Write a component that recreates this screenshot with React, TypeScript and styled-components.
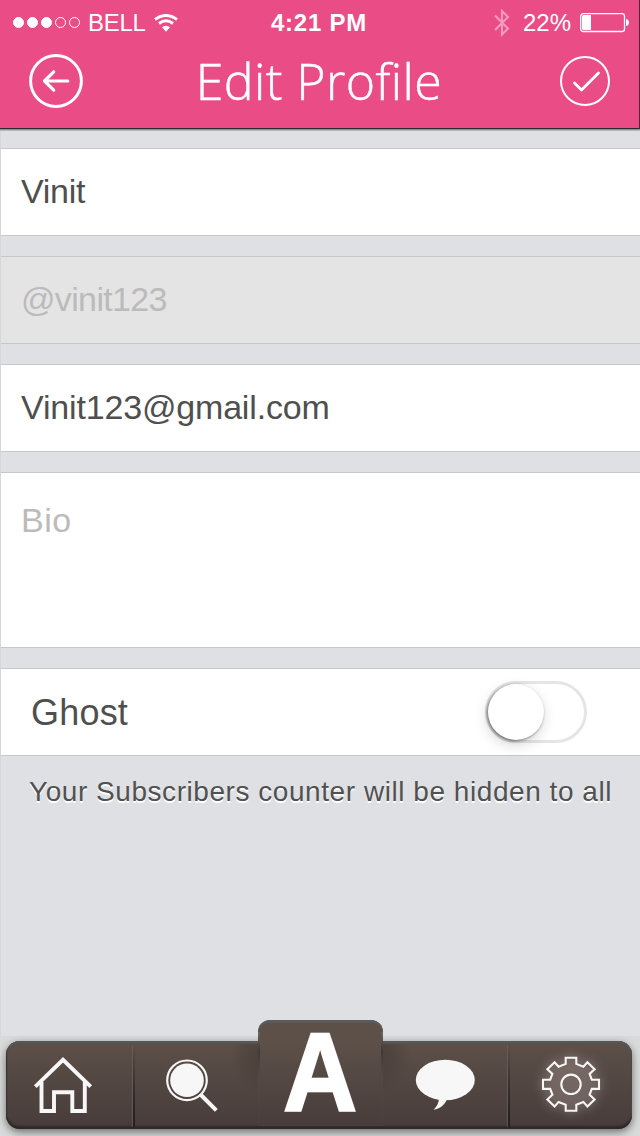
import React from "react";
import styled, { createGlobalStyle } from "styled-components";

const GlobalStyle = createGlobalStyle`
  * { box-sizing: border-box; }
  body { margin: 0; background: #d9dada; font-family: "Liberation Sans", Arial, sans-serif; }
`;

const Screen = styled.div`
  width: 640px;
  height: 1136px;
  display: flex;
  flex-direction: column;
  overflow: hidden;
  background: #d9dada;
`;

const Header = styled.header`
  height: 130px;
  flex: none;
  background: #ea4c86;
  border-bottom: 1px solid #8f9093;
  box-shadow: inset -1px 0 #4a2a38, inset 0 -1px #2c2a2c, 0 1px #b5b6ba;
  position: relative;
  z-index: 1;
`;

const StatusBar = styled.div`
  height: 46px;
  display: grid;
  grid-template-columns: 1fr auto 1fr;
  align-items: center;
  padding: 0 11px 0 13px;
  color: #fff;
  font-size: 24px;
  line-height: 28px;
`;

const StatusGroup = styled.div<{ $end?: boolean }>`
  display: flex;
  align-items: center;
  justify-content: ${(p) => (p.$end ? "flex-end" : "flex-start")};
`;

const Signal = styled.div`
  display: flex;
  gap: 3px;
  margin: 0 8px 1px 0;
`;

const Dot = styled.span<{ $on: boolean }>`
  width: 11px;
  height: 11px;
  border-radius: 50%;
  border: 1px solid #fff;
  background: ${(p) => (p.$on ? "#fff" : "transparent")};
`;

const Carrier = styled.span`
  letter-spacing: -0.3px;
  margin-right: 8px;
`;

const Clock = styled.span`
  font-weight: bold;
  font-size: 24px;
  letter-spacing: 0.75px;
  margin-right: 4px;
`;

const Percent = styled.span`
  margin: 0 9px 0 13px;
`;

const TitleBar = styled.div`
  height: 70px;
  display: flex;
  justify-content: space-between;
  align-items: center;
  padding: 0 30px 0 29px;
`;

const Title = styled.h1`
  margin: 0 5px 0 0;
  color: #fff;
  font: 300 50px/70px "Open Sans", "Noto Sans", sans-serif;
  letter-spacing: 0.4px;
  -webkit-text-stroke: 0.5px #fff;
  white-space: nowrap;
`;

const Content = styled.main`
  height: 906px;
  flex: none;
  background: #dfe0e4;
  border-left: 1px solid #d6d7d9;
  padding-top: 18px;
  display: flex;
  flex-direction: column;
  gap: 20px;
`;

const Field = styled.div<{ $disabled?: boolean; $muted?: boolean; $tall?: boolean }>`
  height: ${(p) => (p.$tall ? 176 : 88)}px;
  flex: none;
  padding: ${(p) => (p.$tall ? 5 : 0)}px 20px 0;
  background: ${(p) => (p.$disabled ? "#e4e4e4" : "#fff")};
  border: solid #c6c7cb;
  border-width: 1px 0;
  color: ${(p) => (p.$muted || p.$disabled ? "#bbb" : "#4f4f4f")};
  font-size: 34px;
  line-height: 85px;
`;

const FieldText = styled.span<{ $spacing: number }>`
  letter-spacing: ${(p) => p.$spacing}px;
`;

const ToggleRow = styled(Field)`
  display: flex;
  align-items: center;
  justify-content: space-between;
  padding: 0 53px 0 30px;
  font-size: 36px;
`;

const Toggle = styled.div`
  width: 102px;
  height: 62px;
  border: 3px solid #e5e5e5;
  border-radius: 31px;
  display: flex;
  align-items: center;
`;

const Knob = styled.div`
  width: 56px;
  height: 56px;
  border-radius: 50%;
  background: #fff;
  box-shadow: -1px 1px 3px rgba(0, 0, 0, 0.5), -1px 5px 14px rgba(0, 0, 0, 0.16);
`;

const Hint = styled.p`
  margin: 0 0 0 28px;
  color: #505151;
  font-size: 28px;
  line-height: 32px;
  letter-spacing: 0.55px;
  white-space: nowrap;
  text-shadow: 0 2px 0 #fff;
`;

const Footer = styled.footer`
  flex: 1;
  padding: 5px 8px 0 6px;
`;

const TabBar = styled.nav`
  height: 88px;
  display: flex;
  border-radius: 14px;
  background: linear-gradient(#5d5049, #473c3a);
  box-shadow: inset 0 2px 1px #55585a, inset 0 -3px 2px #2e2928, inset 1px 0 1px #393636,
    inset -1px 0 1px #555454, 0 3px 8px rgba(0, 0, 0, 0.5);
`;

const Tab = styled.div<{ $width: number }>`
  width: ${(p) => p.$width}px;
  height: 88px;
  flex: none;
  display: flex;
`;

const Divider = styled.div`
  width: 3px;
  height: 82px;
  margin-top: 4px;
  flex: none;
  background: linear-gradient(90deg, rgba(111, 99, 94, 0.65) 1px, transparent 1px),
    linear-gradient(transparent, #242020 90%) right / 2px 100% no-repeat;
`;

const CenterTab = styled.div`
  width: 125px;
  height: 106px;
  margin-top: -21px;
  flex: none;
  position: relative;
  display: flex;
  justify-content: center;
  border-radius: 12px 12px 0 0;
  background: linear-gradient(#5d5049 20%, #483d3b);
  box-shadow: inset 0 3px 1px #5b5b5b;

  &::before,
  &::after {
    content: "";
    position: absolute;
    top: 12px;
    width: 2px;
    height: 46px;
    background: linear-gradient(#666664, #403937 40%, transparent);
  }
  &::before { left: 0; }
  &::after { right: 0; }
`;

const TabShade = styled.div<{ $left?: boolean }>`
  width: 28px;
  height: 50px;
  margin: 3px ${(p) => (p.$left ? "0" : "-28px")} 0 ${(p) => (p.$left ? "-28px" : "0")};
  flex: none;
  background: radial-gradient(ellipse at ${(p) => (p.$left ? "right" : "left")} 20%, rgba(35, 28, 25, 0.25), transparent 70%);
`;

const Letter = styled.span`
  color: #fff;
  font-weight: bold;
  font-size: 111px;
  line-height: 106px;
  transform: scaleX(0.92);
  -webkit-text-stroke: 2.4px #fff;
`;

const gearPoints = (() => {
  const quarter = [
    [5.3, -26.5], [5.3, -20.4], [12.4, -17.6], [16.4, -22.1], [23.6, -15.1],
    [18.6, -10.4], [20.8, -4.6], [28, -4.6],
  ];
  const flip = (sx: number, sy: number) => quarter.map(([x, y]) => [x * sx, y * sy]);
  return [
    ...flip(1, 1), ...flip(1, -1).reverse(), ...flip(-1, -1), ...flip(-1, 1).reverse(),
  ].map((p) => p.join(",")).join(" ");
})();

const BackIcon = () => (
  <svg width="54" height="54" viewBox="0 0 54 54" fill="none" stroke="#fff">
    <circle cx="27" cy="27" r="25.4" strokeWidth="3" />
    <path d="M38.8 27H15.5M24.7 17.8L15.5 27L24.7 36.2" strokeWidth="3.2" strokeLinecap="round" strokeLinejoin="round" />
  </svg>
);

const DoneIcon = () => (
  <svg width="50" height="50" viewBox="0 0 50 50" fill="none" stroke="#fff">
    <circle cx="25" cy="25" r="24" strokeWidth="2" />
    <path d="M14.5 27L21.5 34L38.5 17" strokeWidth="2.8" strokeLinecap="round" strokeLinejoin="round" />
  </svg>
);

const WifiIcon = () => (
  <svg width="24" height="18" viewBox="0 0 24 18" fill="none" stroke="#fff" strokeWidth="2.9">
    <path d="M1 5.5Q12 -2.7 23 5.5" />
    <path d="M5 9.5Q12 4 19 9.5" />
    <path d="M8 13.3Q12 10.2 16 13.3L12 17.8Z" fill="#fff" stroke="none" />
  </svg>
);

const BluetoothIcon = () => (
  <svg width="16" height="28" viewBox="0 0 16 28" fill="none" stroke="#f59abc" strokeWidth="2.1">
    <path d="M1 6.5L14 19.5L8 25.5V2L14 8L1 21" />
  </svg>
);

const BatteryIcon = () => (
  <svg width="49" height="20" viewBox="0 0 49 20">
    <rect x="0.7" y="0.7" width="43.8" height="17.8" rx="2.6" fill="none" stroke="#fff" strokeWidth="1.3" />
    <path d="M2 3.5q0-1.5 1.5-1.5H11V17H3.5Q2 17 2 15.5Z" fill="#fff" />
    <path d="M46 6q3 .5 3 3.5t-3 3.5Z" fill="#fff" />
  </svg>
);

const HomeIcon = () => (
  <svg width="126" height="88" viewBox="0 0 126 88" fill="none" stroke="#f7f7f7" strokeWidth="3.9">
    <path d="M29.3 45.7L57 18.8L84.7 45.7" />
    <path d="M35.5 41V70H48V51.3H66.3V70H78.8V41" />
  </svg>
);

const SearchIcon = () => (
  <svg width="123" height="88" viewBox="0 0 123 88">
    <circle cx="52" cy="39.3" r="19.8" fill="none" stroke="#f7f7f7" strokeWidth="2.2" />
    <circle cx="52" cy="39.3" r="16.8" fill="#f7f7f7" />
    <path d="M66 54L81.3 69.3" stroke="#f7f7f7" strokeWidth="4" />
  </svg>
);

const ChatIcon = () => (
  <svg width="124" height="88" viewBox="0 0 124 88" fill="#f7f7f7">
    <ellipse cx="62.3" cy="39" rx="29.5" ry="20.3" />
    <path d="M56 57C56 61.5 54 65.5 50.5 68.8C57 68 62 64 64.5 57Z" />
  </svg>
);

const SettingsIcon = () => (
  <svg width="122" height="88" viewBox="0 0 122 88" fill="none">
    <defs>
      <filter id="gear-glow" x="-50%" y="-50%" width="200%" height="200%">
        <feGaussianBlur stdDeviation="5" />
      </filter>
    </defs>
    <g transform="translate(61 43.3)">
      <polygon points={gearPoints} fill="#b9a8a3" opacity="0.32" stroke="#b9a8a3" strokeWidth="6" filter="url(#gear-glow)" />
      <polygon points={gearPoints} stroke="#f8f6f5" strokeWidth="2.1" />
      <circle r="9.7" stroke="#f8f6f5" strokeWidth="2.1" />
    </g>
  </svg>
);

export default function App() {
  return (
    <Screen>
      <GlobalStyle />
      <Header>
        <StatusBar>
          <StatusGroup>
            <Signal>
              {[true, true, true, false, false].map((on, i) => <Dot key={i} $on={on} />)}
            </Signal>
            <Carrier>BELL</Carrier>
            <WifiIcon />
          </StatusGroup>
          <Clock>4:21 PM</Clock>
          <StatusGroup $end>
            <BluetoothIcon />
            <Percent>22%</Percent>
            <BatteryIcon />
          </StatusGroup>
        </StatusBar>
        <TitleBar>
          <BackIcon />
          <Title>Edit Profile</Title>
          <DoneIcon />
        </TitleBar>
      </Header>
      <Content>
        <Field><FieldText $spacing={-0.3}>Vinit</FieldText></Field>
        <Field $disabled><FieldText $spacing={-0.65}>@vinit123</FieldText></Field>
        <Field><FieldText $spacing={-0.17}>Vinit123@gmail.com</FieldText></Field>
        <Field $tall $muted><FieldText $spacing={0.5}>Bio</FieldText></Field>
        <ToggleRow>
          <FieldText $spacing={0.2}>Ghost</FieldText>
          <Toggle><Knob /></Toggle>
        </ToggleRow>
        <Hint>Your Subscribers counter will be hidden to all</Hint>
      </Content>
      <Footer>
        <TabBar>
          <Tab $width={126}><HomeIcon /></Tab>
          <Divider />
          <Tab $width={123}><SearchIcon /></Tab>
          <TabShade $left />
          <CenterTab><Letter>A</Letter></CenterTab>
          <TabShade />
          <Tab $width={124}><ChatIcon /></Tab>
          <Divider />
          <Tab $width={122}><SettingsIcon /></Tab>
        </TabBar>
      </Footer>
    </Screen>
  );
}
